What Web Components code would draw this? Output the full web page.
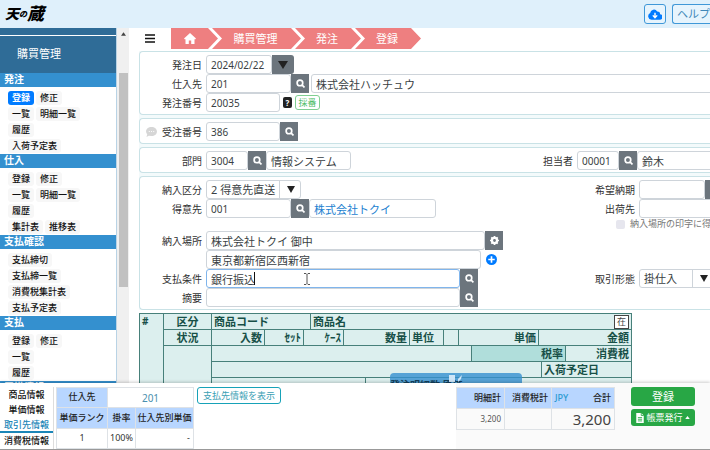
<!DOCTYPE html>
<html lang="ja">
<head>
<meta charset="utf-8">
<title>発注登録</title>
<style>
html,body{height:100%}
body{margin:0;font-family:"Noto Sans","Noto Sans CJK JP",sans-serif;font-size:10px;line-height:1.4;color:#333;background:#fff;overflow:hidden}
</style>
</head>
<body>
<order-app></order-app>
<script>
const ICONS={
search:'<svg viewBox="0 0 16 16" width="9" height="9" fill="none" stroke="#fff" stroke-width="3"><circle cx="7" cy="7" r="5"/><path d="M10.5 10.5 15 15"/></svg>',
down:'<svg viewBox="0 0 10 8" width="10" height="8"><path d="M0 0H10L5 8Z" fill="#222"/></svg>',
gear:'<svg viewBox="0 0 16 16" width="9" height="9"><circle cx="8" cy="8" r="4.5" fill="none" stroke="#fff" stroke-width="4"/><path d="M8 0v3M8 13v3M0 8h3M13 8h3M2.3 2.3l2 2M11.7 11.7l2 2M13.7 2.3l-2 2M4.3 11.7l-2 2" stroke="#fff" stroke-width="3"/></svg>',
cloud:'<svg viewBox="0 0 16 12" width="14" height="11"><path d="M4 12a4 4 0 0 1-1.5-7.600A4.300 4.300 0 0 1 10.500 2.500 2.800 2.800 0 0 1 13.700 5.600 3.200 3.200 0 0 1 13 12Z" fill="#007bff"/><path d="M8 4v5M5.500 7 8 9.600 10.500 7" fill="none" stroke="#fff" stroke-width="1.600"/></svg>',
home:'<svg viewBox="0 0 12 11" width="12" height="11" fill="#fff"><path d="M6 0 12 5.500 11 6.500 10.500 6V11H7.200V7.500H4.800V11H1.500V6L1 6.500 0 5.500Z"/></svg>',
plus:'<svg viewBox="0 0 12 12" width="11" height="11"><circle cx="6" cy="6" r="6" fill="#007bff"/><path d="M6 2.500v7M2.500 6h7" stroke="#fff" stroke-width="1.800"/></svg>',
chat:'<svg viewBox="0 0 12 11" width="11" height="10"><path d="M6 0C9.500 0 12 2 12 5S9.500 10 6 10L3 9.500 0.500 11 1.300 8C.500 7.200 0 6.200 0 5 0 2 2.500 0 6 0Z" fill="#d6d6d6"/><path d="M3 5h1.200M5.400 5h1.200M7.800 5h1.200" stroke="#fff"/></svg>',
file:'<svg viewBox="0 0 9 12" width="8" height="10"><path d="M0 0H6L9 3V12H0Z" fill="#fff"/><path d="M2 5.500H7M2 7.500H7M2 9.500H7M6 0V3H9" stroke="#28a745" fill="none"/></svg>'
};
const BASE='*{box-sizing:border-box}button,input,select{font:inherit;margin:0;padding:0;border-radius:0}a{text-decoration:none;color:inherit}svg{display:block;flex:none}';
let serial=0;
function define(name,render){
  customElements.define(name,class extends HTMLElement{
    connectedCallback(){
      if(this.shadowRoot)return;
      const r=this.attachShadow({mode:'open'});
      const t=document.createElement('template');
      t.innerHTML='<style>'+BASE+'</style>'+render(n=>this.getAttribute(n)||'',this);
      r.append(t.content.cloneNode(true));
    }
  });
}

define('app-header',()=>`<style>
:host{display:flex;flex:none;height:28px;background:#dff0fb;align-items:center;gap:6px;overflow:hidden}
h1{margin:0 auto 0 5px;display:flex;align-items:center;font-weight:900;font-style:italic;font-size:14px;line-height:24px;color:#000}
h1 small{font-size:8px}h1 b{font-size:17px;font-weight:900}
button{height:20px;border:1px solid #3f98d8;border-radius:3px;background:#e6f4fd;color:#3f87b8;flex:none;display:flex;align-items:center;justify-content:center}
.c{width:22px}.h{width:38px;margin-right:0;border-right:0;border-radius:3px 0 0 3px;overflow:hidden;font-size:11px;justify-content:flex-start;padding-left:4px;white-space:nowrap}
</style><h1>天<small>の</small><b>蔵</b></h1><button class="c" aria-label="ダウンロード">${ICONS.cloud}</button><button class="h">ヘルプサイト</button>`);

define('side-section',a=>`<style>
:host{display:block}
h3{margin:0;height:14px;background:#3490cf;color:#fff;font-size:10px;line-height:13px;font-weight:700;padding-left:4px}
ul{list-style:none;margin:0;padding:3px 0 0 8px}
li{height:16px;display:flex;align-items:center;gap:2px;font-size:9px;font-weight:500;color:#111}
a{height:14px;line-height:14px;padding:0 4px;background:#f7f7f7;border-radius:3px;white-space:nowrap}
a.on{background:#007bff;color:#fff;font-weight:700}
</style><h3>${a('head')}</h3>${a('items')?'<ul>'+a('items').split('|').map(r=>'<li>'+r.split(',').map(t=>t[0]==='*'?`<a class="on" href="#" aria-current="page">${t.slice(1)}</a>`:`<a href="#">${t}</a>`).join('')+'</li>').join('')+'</ul>':''}`);

define('side-menu',()=>`<style>
:host{display:flex;flex:none;width:129px;overflow:hidden;background:#fff}
nav{flex:1;overflow:hidden;border-right:1px solid #b9d3e5}
.top{height:7px;background:#2f6c97;border-bottom:0}
h2{margin:1px 0 0;height:37px;background:#2f6c97;color:#fff;font-size:11px;font-weight:400;line-height:36px;padding-left:17px}
.bar{width:12px;flex:none;background:#f0f0f0;display:flex;flex-direction:column;align-items:center;padding-top:4px}
.bar i{width:9px;height:61%;margin-top:37px;background:#c1c1c1}
</style><nav><div class="top"></div><h2>購買管理</h2>
<side-section head="発注" items="*登録,修正|一覧,明細一覧|履歴|入荷予定表"></side-section>
<side-section head="仕入" items="登録,修正|一覧,明細一覧|履歴|集計表,推移表"></side-section>
<side-section head="支払確認" items="支払締切|支払締一覧|消費税集計表|支払予定表"></side-section>
<side-section head="支払" items="登録,修正|一覧|履歴"></side-section>
<side-section head="買掛情報"></side-section></nav>
<div class="bar"><svg width="5" height="4" viewBox="0 0 6 4"><path d="M0 4 3 0 6 4Z" fill="#444"/></svg><i></i></div>`);

define('crumb-trail',()=>`<style>
:host{display:flex;height:21px;margin-bottom:2px}
.menu{width:42px;border:0;background:none;padding-left:16px;display:flex;align-items:center}
ol{display:flex;list-style:none;margin:0;padding:0}
li{background:#ee7f80;color:#fff;font-size:11px;width:66px;padding-right:2px;display:flex;align-items:center;justify-content:center;margin-left:-6px;clip-path:polygon(0 0,calc(100% - 10px) 0,100% 50%,calc(100% - 10px) 100%,0 100%,10px 50%)}
li:first-child{width:47px;margin:0;padding-right:9px;clip-path:polygon(0 0,calc(100% - 10px) 0,100% 50%,calc(100% - 10px) 100%,0 100%)}
li:nth-child(2){width:89px}
</style><button class="menu" aria-label="メニュー"><svg width="10" height="9" viewBox="0 0 10 9"><path d="M0 1h10M0 4.500h10M0 8h10" stroke="#111" stroke-width="1.500"/></svg></button>
<ol><li><a href="#" aria-label="ホーム">${ICONS.home}</a></li><li><a href="#">購買管理</a></li><li><a href="#">発注</a></li><li><a href="#">登録</a></li></ol>`);

define('form-panel',()=>`<style>
:host{display:block;border:1px solid #c9e2e6;border-right:0;border-radius:4px 0 0 4px;background:#fff;padding:3px 0 2px}
</style><slot></slot>`);

/* label + control + optional attached button + optional name box */
define('form-field',a=>{
  const id='f'+(++serial),w=a('w'),box=w?`width:${w}px;flex:none`:'flex:1';
  const opt=a('kind')==='select';
  return `<style>
:host{display:flex;height:19px;align-items:stretch;min-width:0}
label,.lb{width:var(--label,62px);flex:none;text-align:right;line-height:18px;white-space:nowrap;display:flex;justify-content:flex-end;align-items:center;gap:5px;margin-right:4px}
input,select{width:100%;height:19px;border:1px solid #ced4da;border-radius:3px;background:#fff;color:#3a3f44;padding:0 4px;appearance:none;outline:0;min-width:0}
.t{font-size:11px}.focus input{border-color:#80b5ec}
.box{position:relative;min-width:0;display:flex}
.arr{position:absolute;right:0;top:1px;bottom:1px;width:22px;border-left:1px solid #ced4da;display:flex;align-items:center;justify-content:center;pointer-events:none}
button{width:18px;flex:none;border:0;background:#6c757d;display:flex;align-items:center;justify-content:center}
.wide{width:22px;border-radius:0 3px 3px 0}
input.link{color:#1c7fd0}
.caret{position:absolute;left:48px;top:3px;width:1px;height:13px;background:#111}
.beam{position:absolute;left:98px;top:4px}
</style><label for="${id}">${a('icon')?ICONS[a('icon')]:''}${a('label')}</label>
<span class="box ${a('state')}" style="${box}">${opt?`<select id="${id}" class="t"><option>${a('value')}</option></select><span class="arr"><svg viewBox="0 0 8 7" width="8" height="7"><path d="M0 0H8L4 7Z" fill="#222"/></svg></span>`:`<input id="${id}" class="${a('big')?'t':''}" value="${a('value')}">`}${a('state')?'<i class="caret"></i><svg class="beam" width="6" height="12" viewBox="0 0 6 12"><path d="M0 .5H2L3 1.500 4 .5H6M3 1.500V10.500M0 11.500H2L3 10.500 4 11.500H6" fill="none" stroke="#555"/></svg>':''}</span>
${a('btn')?`<button aria-label="${a('label')} ${a('btn')}" class="${a('btn')==='down'?'wide':''}">${ICONS[a('btn')]}</button>`:''}
${a('name')?`<span class="box" style="${a('nw')?`width:${a('nw')}px;flex:none`:'flex:1'};margin-left:${a('gap')||0}px"><input class="t ${a('tone')}" aria-label="${a('label')}名" value="${a('name')}"></span>`:''}<slot></slot>`;
});

define('order-form',()=>`<style>
:host{display:flex;flex-direction:column;gap:3px;background:#f3fafb;margin-right:-4px}
.row{display:flex}.row>:last-child{margin-left:auto;width:175px}
.grid{display:grid;grid-template-columns:minmax(0,1fr) 139px;grid-template-rows:19px 19px 13px repeat(4,19px)}
.r{--label:60px;grid-column:2}.l{grid-column:1}
.q{align-self:center;margin-left:3px;width:9px;height:11px;border-radius:2px;background:#222;color:#fff;font-size:8px;line-height:11px;font-weight:700;text-align:center}
.num{align-self:center;margin-left:3px;width:25px;height:15px;border:1px solid #7fcf92;border-radius:3px;background:#fff;color:#4fbd69;font-size:9px;line-height:12px}
.chk{display:flex;align-items:center;gap:5px;padding-left:41px;font-size:9px;color:#777;white-space:nowrap;overflow:hidden;grid-area:3/2}
.chk input{appearance:none;width:9px;height:9px;background:#e6e6ee;border-radius:2px;flex:none}
.add{border:0;background:none;align-self:center;margin-left:5px}
</style>
<form-panel>
<form-field label="発注日" value="2024/02/22" w="66" btn="down"></form-field>
<form-field label="仕入先" value="201" w="85" btn="search" name="株式会社ハッチュウ" gap="2"></form-field>
<form-field label="発注番号" value="20035" w="74"><span class="q">?</span><button class="num">採番</button></form-field>
</form-panel>
<form-panel><form-field icon="chat" label="受注番号" value="386" w="74" btn="search"></form-field></form-panel>
<form-panel><div class="row"><form-field label="部門" value="3004" w="42" btn="search" name="情報システム" nw="85"></form-field>
<form-field style="--label:34px" label="担当者" value="00001" w="42" btn="search" name="鈴木"></form-field></div></form-panel>
<form-panel><div class="grid">
<form-field class="l" label="納入区分" kind="select" value="2 得意先直送" w="95"></form-field>
<form-field class="r" label="希望納期" w="66" btn="down"></form-field>
<form-field class="l" label="得意先" value="001" w="85" btn="search" name="株式会社トクイ" nw="127" tone="link"></form-field>
<form-field class="r" label="出荷先"></form-field>
<label class="chk"><input type="checkbox">納入場所の印字に得意先名</label>
<form-field class="l" style="grid-row:4" label="納入場所" value="株式会社トクイ 御中" big="1" w="279" btn="gear"></form-field>
<form-field class="l" style="grid-row:5" value="東京都新宿区西新宿" big="1" w="275"><button class="add" aria-label="追加">${ICONS.plus}</button></form-field>
<form-field class="l" style="grid-row:6" label="支払条件" value="銀行振込" big="1" w="254" btn="search" state="focus"></form-field>
<form-field class="r" style="grid-row:6" label="取引形態" kind="select" value="掛仕入" w="75"></form-field>
<form-field class="l" style="grid-row:7" label="摘要" w="254" btn="search"></form-field>
</div></form-panel>`);

define('item-table',()=>`<style>
:host{display:block;position:relative;margin-top:3px;width:492px}
table{width:100%;border-collapse:collapse;table-layout:fixed;background:#dcefee;color:#174f47;outline:0}
th{border:1px solid #47807a;height:16px;line-height:14px;padding:0 2px;font-size:11px;font-weight:700;white-space:nowrap;overflow:hidden;text-align:left}
.c{text-align:center}.e{text-align:right}.s{font-size:10px}.top{vertical-align:top}.tax{background:#b0dedb}
th span{float:right;border:1px solid #444;background:#fff;font-size:9px;font-weight:400;line-height:12px;width:15px;height:14px;text-align:center;color:#444}
.bar{position:absolute;left:251px;top:60px;width:132px;height:26px;background:#3490cfcc;border-radius:4px;color:#123f5c;font-size:10px;line-height:14px;padding-top:5px;font-weight:700}
.bar svg{position:absolute;left:59px;top:2px}
</style><table><colgroup>${[24,48,53,39,7,33,22,44,34,15,13,67,3,24,66].map(w=>`<col style="width:${w}px">`).join('')}</colgroup>
<tr><th rowspan="6" class="top s">#</th><th class="c">区分</th><th colspan="3">商品コード</th><th colspan="10"><span>在</span>商品名</th></tr>
<tr><th class="c">状況</th><th class="e">入数</th><th class="e">ｾｯﾄ</th><th colspan="2" class="e">ｹｰｽ</th><th colspan="2" class="e">数量</th><th>単位</th><th></th><th colspan="2" class="e">単価</th><th colspan="3" class="e">金額</th></tr>
<tr><th rowspan="4"></th><th colspan="9"></th><th colspan="3" class="e tax">税率</th><th class="e" colspan="1">消費税</th></tr>
<tr><th colspan="11"></th><th colspan="2">入荷予定日</th></tr>
<tr><th colspan="5"></th><th colspan="8"></th></tr>
<tr><th colspan="13"></th></tr></table>
<div class="bar">発注明細数 原価<svg width="14" height="7" viewBox="0 0 14 7"><path d="M0 0H6V7H0ZM9 4 13 0 12 4 9 7Z" fill="#cfe6f7"/></svg></div>`);

define('info-footer',()=>`<style>
:host{display:flex;flex:none;height:67px;background:#fff;border-bottom:1px solid #999;box-shadow:0 -1px 3px #0003;position:relative;overflow:visible;padding-top:4px}
nav{width:54px;flex:none;border-right:1px solid #ddd;display:flex;flex-direction:column;font-size:9px;font-weight:500;color:#111}
nav a{height:15px;line-height:15px;text-align:center;white-space:nowrap}
nav .on{color:#1b86b8;border-bottom:2px solid #1b86b8;height:16px}
table{border-collapse:collapse;table-layout:fixed;font-size:9px}
th,td{border:1px solid #dee2e6;padding:0 3px;white-space:nowrap;font-weight:500}
th{background:#b8d6ff;color:#222}td{font-weight:400}
.info{width:138px;margin-left:2px;flex:none}.info tr{height:19px}.info th,.info td{text-align:center;padding:0}
.info .v{font-size:10px;color:#4a8fae}.info .e{text-align:right;padding-right:3px}
.show{height:17px;width:84px;margin-left:3px;border:1px solid #17a2b8;border-radius:3px;background:#fff;color:#3aa0b4;font-size:9px;line-height:14px;flex:none;white-space:nowrap}
.sum{margin:-4px 0 0 auto;padding:4px 15px 0 0;background:#fafafa;display:flex;gap:16px;flex:none}
.sum table{width:159px}.sum tr{height:21px}.sum th,.sum td{text-align:right}
.sum table{align-self:flex-start}.sum i{float:left;font-style:normal;color:#2b9bd0;font-weight:500}
.sum td{font-size:8px;color:#555}.sum .big{font-size:15px;line-height:19px;color:#444}
.btns{display:flex;flex-direction:column;gap:3px;width:64px}
.btns button{height:19px;border:0;border-radius:3px;background:#28a745;color:#fff;font-size:11px;display:flex;align-items:center;justify-content:center;gap:2px;white-space:nowrap;line-height:16px}
.btns .p{font-size:9px;height:17px}
</style><nav><a href="#">商品情報</a><a href="#">単価情報</a><a href="#" class="on">取引先情報</a><a href="#">消費税情報</a></nav>
<table class="info"><colgroup><col style="width:51px"><col style="width:28px"><col></colgroup>
<tr><th>仕入先</th><td colspan="2" class="v">201</td></tr><tr><th>単価ランク</th><th>掛率</th><th>仕入先別単価</th></tr><tr><td>1</td><td>100%</td><td class="e">-</td></tr></table>
<button class="show">支払先情報を表示</button>
<div class="sum"><table><colgroup><col style="width:48px"><col style="width:47px"><col></colgroup><tr><th>明細計</th><th>消費税計</th><th><i>JPY</i>合計</th></tr><tr><td>3,200</td><td></td><td class="big">3,200</td></tr></table>
<div class="btns"><button>登録</button><button class="p">${ICONS.file}帳票発行<svg width="5" height="3" viewBox="0 0 6 4"><path d="M0 4 3 0 6 4Z" fill="#fff"/></svg></button></div></div>`);

define('order-app',()=>`<style>
:host{display:flex;flex-direction:column;height:100vh}
.mid{flex:1;min-height:0;display:flex}
main{flex:1;min-width:0;overflow:hidden;padding-left:10px}
crumb-trail{margin-left:-10px}
</style><app-header></app-header><div class="mid"><side-menu></side-menu><main><crumb-trail></crumb-trail><order-form></order-form><item-table></item-table></main></div><info-footer></info-footer>`);
</script>
</body>
</html>
